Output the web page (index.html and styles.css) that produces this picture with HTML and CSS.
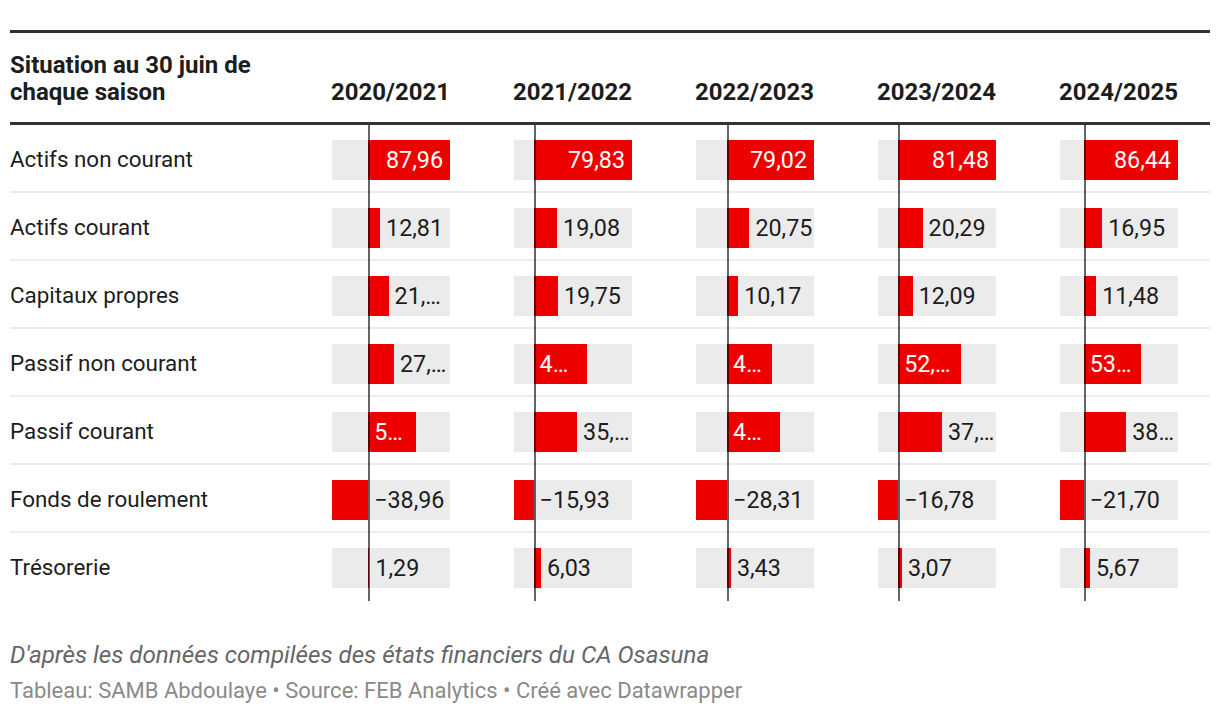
FILE: index.html
```html
<!DOCTYPE html>
<html lang="fr">
<head>
<meta charset="utf-8">
<title>Situation financière CA Osasuna</title>
<link rel="stylesheet" href="styles.css">
</head>
<body>
<div class="page">
  <div class="table">
    <div class="row head">
      <div class="label">Situation au 30 juin de chaque saison</div>
      <div class="year">2020/2021</div>
      <div class="year">2021/2022</div>
      <div class="year">2022/2023</div>
      <div class="year">2023/2024</div>
      <div class="year">2024/2025</div>
    </div>

    <div class="row">
      <div class="label">Actifs non courant</div>
      <div class="cell"><span class="axis" style="left:100.2px"></span><div class="track"><span class="sp" style="width:36.2px"></span><span class="bar" style="width:81.8px"><span class="in">87,96</span></span></div></div>
      <div class="cell"><span class="axis" style="left:83.6px"></span><div class="track"><span class="sp" style="width:19.6px"></span><span class="bar" style="width:98.4px"><span class="in">79,83</span></span></div></div>
      <div class="cell"><span class="axis" style="left:95.1px"></span><div class="track"><span class="sp" style="width:31.1px"></span><span class="bar" style="width:86.9px"><span class="in">79,02</span></span></div></div>
      <div class="cell"><span class="axis" style="left:84.2px"></span><div class="track"><span class="sp" style="width:20.2px"></span><span class="bar" style="width:97.8px"><span class="in">81,48</span></span></div></div>
      <div class="cell"><span class="axis" style="left:87.7px"></span><div class="track"><span class="sp" style="width:23.7px"></span><span class="bar" style="width:94.3px"><span class="in">86,44</span></span></div></div>
    </div>

    <div class="row">
      <div class="label">Actifs courant</div>
      <div class="cell"><span class="axis" style="left:100.2px"></span><div class="track"><span class="sp" style="width:36.2px"></span><span class="bar" style="width:11.9px"></span><span class="out">12,81</span></div></div>
      <div class="cell"><span class="axis" style="left:83.6px"></span><div class="track"><span class="sp" style="width:19.6px"></span><span class="bar" style="width:23.5px"></span><span class="out">19,08</span></div></div>
      <div class="cell"><span class="axis" style="left:95.1px"></span><div class="track"><span class="sp" style="width:31.1px"></span><span class="bar" style="width:22.3px"></span><span class="out">20,75</span></div></div>
      <div class="cell"><span class="axis" style="left:84.2px"></span><div class="track"><span class="sp" style="width:20.2px"></span><span class="bar" style="width:24.4px"></span><span class="out">20,29</span></div></div>
      <div class="cell"><span class="axis" style="left:87.7px"></span><div class="track"><span class="sp" style="width:23.7px"></span><span class="bar" style="width:18.5px"></span><span class="out">16,95</span></div></div>
    </div>

    <div class="row">
      <div class="label">Capitaux propres</div>
      <div class="cell"><span class="axis" style="left:100.2px"></span><div class="track"><span class="sp" style="width:36.2px"></span><span class="bar" style="width:20.4px"></span><span class="out">21,90</span></div></div>
      <div class="cell"><span class="axis" style="left:83.6px"></span><div class="track"><span class="sp" style="width:19.6px"></span><span class="bar" style="width:24.3px"></span><span class="out">19,75</span></div></div>
      <div class="cell"><span class="axis" style="left:95.1px"></span><div class="track"><span class="sp" style="width:31.1px"></span><span class="bar" style="width:11.2px"></span><span class="out">10,17</span></div></div>
      <div class="cell"><span class="axis" style="left:84.2px"></span><div class="track"><span class="sp" style="width:20.2px"></span><span class="bar" style="width:14.5px"></span><span class="out">12,09</span></div></div>
      <div class="cell"><span class="axis" style="left:87.7px"></span><div class="track"><span class="sp" style="width:23.7px"></span><span class="bar" style="width:12.5px"></span><span class="out">11,48</span></div></div>
    </div>

    <div class="row">
      <div class="label">Passif non courant</div>
      <div class="cell"><span class="axis" style="left:100.2px"></span><div class="track"><span class="sp" style="width:36.2px"></span><span class="bar" style="width:25.8px"></span><span class="out">27,72</span></div></div>
      <div class="cell"><span class="axis" style="left:83.6px"></span><div class="track"><span class="sp" style="width:19.6px"></span><span class="bar" style="width:53px"><span class="in">43,02</span></span></div></div>
      <div class="cell"><span class="axis" style="left:95.1px"></span><div class="track"><span class="sp" style="width:31.1px"></span><span class="bar" style="width:45.3px"><span class="in">41,20</span></span></div></div>
      <div class="cell"><span class="axis" style="left:84.2px"></span><div class="track"><span class="sp" style="width:20.2px"></span><span class="bar" style="width:62.8px"><span class="in">52,28</span></span></div></div>
      <div class="cell"><span class="axis" style="left:87.7px"></span><div class="track"><span class="sp" style="width:23.7px"></span><span class="bar" style="width:57.3px"><span class="in">53,51</span></span></div></div>
    </div>

    <div class="row">
      <div class="label">Passif courant</div>
      <div class="cell"><span class="axis" style="left:100.2px"></span><div class="track"><span class="sp" style="width:36.2px"></span><span class="bar" style="width:47.6px"><span class="in">51,15</span></span></div></div>
      <div class="cell"><span class="axis" style="left:83.6px"></span><div class="track"><span class="sp" style="width:19.6px"></span><span class="bar" style="width:43.5px"></span><span class="out">35,28</span></div></div>
      <div class="cell"><span class="axis" style="left:95.1px"></span><div class="track"><span class="sp" style="width:31.1px"></span><span class="bar" style="width:53.2px"><span class="in">48,40</span></span></div></div>
      <div class="cell"><span class="axis" style="left:84.2px"></span><div class="track"><span class="sp" style="width:20.2px"></span><span class="bar" style="width:43.8px"></span><span class="out">37,40</span></div></div>
      <div class="cell"><span class="axis" style="left:87.7px"></span><div class="track"><span class="sp" style="width:23.7px"></span><span class="bar" style="width:42.6px"></span><span class="out">38,40</span></div></div>
    </div>

    <div class="row">
      <div class="label">Fonds de roulement</div>
      <div class="cell"><span class="axis" style="left:100.2px"></span><div class="track"><span class="sp" style="width:0px"></span><span class="bar" style="width:36.2px"></span><span class="out">−38,96</span></div></div>
      <div class="cell"><span class="axis" style="left:83.6px"></span><div class="track"><span class="sp" style="width:0px"></span><span class="bar" style="width:19.6px"></span><span class="out">−15,93</span></div></div>
      <div class="cell"><span class="axis" style="left:95.1px"></span><div class="track"><span class="sp" style="width:0px"></span><span class="bar" style="width:31.1px"></span><span class="out">−28,31</span></div></div>
      <div class="cell"><span class="axis" style="left:84.2px"></span><div class="track"><span class="sp" style="width:0px"></span><span class="bar" style="width:20.2px"></span><span class="out">−16,78</span></div></div>
      <div class="cell"><span class="axis" style="left:87.7px"></span><div class="track"><span class="sp" style="width:0px"></span><span class="bar" style="width:23.7px"></span><span class="out">−21,70</span></div></div>
    </div>

    <div class="row last">
      <div class="label">Trésorerie</div>
      <div class="cell"><span class="axis" style="left:100.2px"></span><div class="track"><span class="sp" style="width:36.2px"></span><span class="bar" style="width:1.2px"></span><span class="out">1,29</span></div></div>
      <div class="cell"><span class="axis" style="left:83.6px"></span><div class="track"><span class="sp" style="width:19.6px"></span><span class="bar" style="width:7.4px"></span><span class="out">6,03</span></div></div>
      <div class="cell"><span class="axis" style="left:95.1px"></span><div class="track"><span class="sp" style="width:31.1px"></span><span class="bar" style="width:3.8px"></span><span class="out">3,43</span></div></div>
      <div class="cell"><span class="axis" style="left:84.2px"></span><div class="track"><span class="sp" style="width:20.2px"></span><span class="bar" style="width:3.7px"></span><span class="out">3,07</span></div></div>
      <div class="cell"><span class="axis" style="left:87.7px"></span><div class="track"><span class="sp" style="width:23.7px"></span><span class="bar" style="width:6.2px"></span><span class="out">5,67</span></div></div>
    </div>
  </div>

  <p class="notes">D'après les données compilées des états financiers du CA Osasuna</p>
  <p class="byline">Tableau: SAMB Abdoulaye • Source: FEB Analytics • Créé avec Datawrapper</p>
</div>
</body>
</html>
```

FILE: styles.css
```css
* { box-sizing: border-box; }

html, body {
  margin: 0;
  padding: 0;
  background: #ffffff;
}

body {
  font-family: Roboto, "Liberation Sans", Arial, sans-serif;
  color: #1d1d1d;
}

.page {
  width: 1220px;
  padding: 30px 10px 0 10px;
}

.table {
  width: 1200px;
}

.row {
  display: grid;
  grid-template-columns: 258px repeat(5, 182px);
  align-items: stretch;
  border-bottom: 2px solid #ececec;
}

.row.last {
  border-bottom-color: transparent;
}

.row.head {
  border-top: 3px solid #333333;
  border-bottom: 3px solid #333333;
  padding: 19px 0 17px 0;
  align-items: end;
  font-weight: 700;
  font-size: 24px;
  line-height: 26.6px;
  color: #1d1d1d;
}

.year {
  text-align: right;
}

.row .label {
  font-size: 22.4px;
  display: flex;
  align-items: center;
  padding-top: 14px;
  padding-bottom: 12px;
  line-height: 26px;
}

.row.head .label {
  display: block;
  font-size: 24px;
  padding: 0 8px 0 0;
  line-height: 26.6px;
}

.cell {
  position: relative;
  padding: 15px 0 11px 0;
  display: flex;
  justify-content: flex-end;
}

.track {
  width: 118px;
  height: 40px;
  background: #ebebeb;
  display: flex;
  font-size: 23.3px;
  line-height: 40px;
}

.sp {
  flex: none;
}

.bar {
  flex: none;
  height: 40px;
  background: #ee0000;
  display: flex;
  justify-content: flex-end;
  overflow: hidden;
}

.in {
  display: block;
  min-width: 0;
  padding: 0 7px 0 6px;
  color: #ffffff;
  white-space: nowrap;
  overflow: hidden;
  text-overflow: ellipsis;
}

.out {
  display: block;
  flex: 1 1 0;
  min-width: 0;
  padding: 0 1px 0 6px;
  color: #1d1d1d;
  white-space: nowrap;
  overflow: hidden;
  text-overflow: ellipsis;
}

.axis {
  position: absolute;
  top: 0;
  bottom: -2px;
  width: 2px;
  background: rgba(0, 0, 0, 0.6);
  z-index: 2;
}

.notes {
  margin: 40px 0 0 0;
  font-size: 24.2px;
  line-height: 28px;
  font-style: italic;
  color: #666666;
}

.byline {
  margin: 9px 0 0 0;
  font-size: 22px;
  line-height: 26px;
  color: #8a8a8a;
}
```
